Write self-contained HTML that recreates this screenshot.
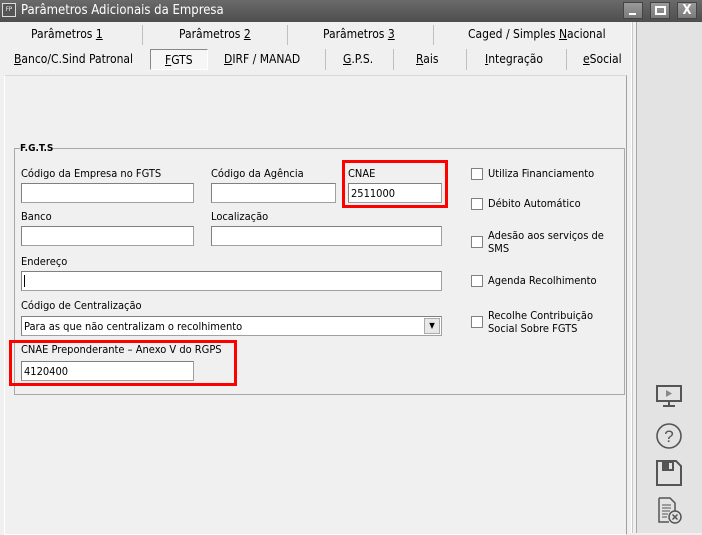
<!DOCTYPE html>
<html><head><meta charset="utf-8"><style>
*{box-sizing:border-box;margin:0;padding:0}
body{width:702px;height:533px;overflow:hidden;background:#f0f0f0;font-family:"DejaVu Sans Condensed","Liberation Sans",sans-serif;font-size:11px;color:#000;position:relative}
.a{position:absolute;white-space:nowrap}
.t{font-size:12px}
.title{left:0;top:0;width:702px;height:22px;background:linear-gradient(#6a6a6a,#4e4e4e);color:#fff;font-size:13px}
.wb{top:2px;width:20px;height:17px;background:linear-gradient(#9a9a9a,#7a7a7a);border:1px solid #444}
.inp{background:#fff;border:1px solid #a0a0a0;border-top-color:#808080;border-left-color:#808080;height:20px;padding:3px 2px}
.cb{width:12px;height:12px;border:1px solid #808080;background:#fff}
.sep{width:1px;background:#c0c0c0}
.red{border:3px solid #f00}
</style></head><body>
<div class="a title"><div class="a" style="left:2px;top:3px;width:14px;height:14px;border:1px solid #ddd;font-size:6px;line-height:12px;text-align:center;background:#555">FP</div><span class="a" style="left:21px;top:3px">Parâmetros Adicionais da Empresa</span>
<div class="a wb" style="left:623px"><div class="a" style="left:5px;top:10px;width:7px;height:2px;background:#fff"></div></div>
<div class="a wb" style="left:650px"><div class="a" style="left:4px;top:3px;width:11px;height:9px;border:2px solid #fff"></div></div>
<div class="a wb" style="left:677px;color:#fff;font-weight:bold;text-align:center;line-height:15px;font-size:13px">X</div></div>
<div class="a" style="left:636px;top:22px;width:66px;height:511px;background:#e3e3e3;border-left:1px solid #a8a8a8"></div>
<div class="a" style="left:631px;top:22px;width:2px;height:511px;background:#fff;border-right:1px solid #c8c8c8"></div>
<span class="a t" style="left:31px;top:27px">Parâmetros <u>1</u></span>
<span class="a t" style="left:179px;top:27px">Parâmetros <u>2</u></span>
<span class="a t" style="left:323px;top:27px">Parâmetros <u>3</u></span>
<span class="a t" style="left:468px;top:27px">Caged / Simples <u>N</u>acional</span>
<div class="a sep" style="left:142px;top:25px;height:20px"></div><div class="a sep" style="left:287px;top:25px;height:20px"></div><div class="a sep" style="left:433px;top:25px;height:20px"></div>
<span class="a t" style="left:14px;top:52px"><u>B</u>anco/C.Sind Patronal</span>
<div class="a" style="left:150px;top:49px;width:58px;height:21px;border:1px solid #888;border-right-color:#fff;border-bottom-color:#fff;background:#f6f6f6"></div>
<span class="a t" style="left:165px;top:53px"><u>F</u>GTS</span>
<span class="a t" style="left:224px;top:52px"><u>D</u>IRF / MANAD</span>
<span class="a t" style="left:343px;top:52px"><u>G</u>.P.S.</span>
<span class="a t" style="left:416px;top:52px"><u>R</u>ais</span>
<span class="a t" style="left:485px;top:52px"><u>I</u>ntegração</span>
<span class="a t" style="left:583px;top:52px"><u>e</u>Social</span>
<div class="a sep" style="left:325px;top:49px;height:21px"></div><div class="a sep" style="left:393px;top:49px;height:21px"></div><div class="a sep" style="left:466px;top:49px;height:21px"></div><div class="a sep" style="left:566px;top:49px;height:21px"></div>
<div class="a" style="left:4px;top:75px;width:623px;height:460px;border:1px solid #fff;border-right-color:#a0a0a0;border-top-color:#d8d8d8"></div>
<div class="a" style="left:14px;top:148px;width:611px;height:247px;border:1px solid #a8a8a8"></div>
<span class="a" style="left:20px;top:143px;font-weight:bold;background:#f0f0f0;font-size:10px">F.G.T.S</span>
<span class="a" style="left:21px;top:167px">Código da Empresa no FGTS</span>
<div class="a inp" style="left:21px;top:183px;width:173px"></div>
<span class="a" style="left:211px;top:167px">Código da Agência</span>
<div class="a inp" style="left:211px;top:183px;width:125px"></div>
<div class="a red" style="left:342px;top:160px;width:106px;height:48px"></div>
<span class="a" style="left:348px;top:167px">CNAE</span>
<div class="a inp" style="left:348px;top:183px;width:94px">2511000</div>
<span class="a" style="left:21px;top:210px">Banco</span>
<div class="a inp" style="left:21px;top:226px;width:173px"></div>
<span class="a" style="left:211px;top:210px">Localização</span>
<div class="a inp" style="left:211px;top:226px;width:231px"></div>
<span class="a" style="left:21px;top:255px">Endereço</span>
<div class="a inp" style="left:21px;top:271px;width:421px"><div style="width:1px;height:12px;background:#000"></div></div>
<span class="a" style="left:21px;top:299px">Código de Centralização</span>
<div class="a inp" style="left:21px;top:316px;width:421px">Para as que não centralizam o recolhimento
<div class="a" style="right:1px;top:1px;width:16px;height:16px;background:#e8e8e8;border:1px solid #aaa;font-size:8px;text-align:center;line-height:14px">▼</div></div>
<div class="a red" style="left:9px;top:340px;width:228px;height:46px"></div>
<span class="a" style="left:21px;top:343px">CNAE Preponderante – Anexo V do RGPS</span>
<div class="a inp" style="left:21px;top:361px;width:173px">4120400</div>
<div class="a cb" style="left:471px;top:168px"></div><span class="a" style="left:488px;top:167px">Utiliza Financiamento</span>
<div class="a cb" style="left:471px;top:198px"></div><span class="a" style="left:488px;top:197px">Débito Automático</span>
<div class="a cb" style="left:471px;top:236px"></div><span class="a" style="left:488px;top:229px;line-height:13px">Adesão aos serviços de<br>SMS</span>
<div class="a cb" style="left:471px;top:275px"></div><span class="a" style="left:488px;top:274px">Agenda Recolhimento</span>
<div class="a cb" style="left:471px;top:316px"></div><span class="a" style="left:488px;top:309px;line-height:13px">Recolhe Contribuição<br>Social Sobre FGTS</span>
<svg class="a" style="left:655px;top:385px" width="28" height="24" viewBox="0 0 28 24"><rect x="2" y="1" width="24" height="15" fill="none" stroke="#555" stroke-width="2"/><path d="M11 5l6 3.5-6 3.5z" fill="#888"/><path d="M14 16v4M8 21h12" stroke="#555" stroke-width="2"/></svg>
<svg class="a" style="left:655px;top:422px" width="28" height="28" viewBox="0 0 28 28"><circle cx="14" cy="14" r="12" fill="none" stroke="#555" stroke-width="1.6"/><text x="14" y="20" font-size="17" text-anchor="middle" fill="#555" font-family="Liberation Sans">?</text></svg>
<svg class="a" style="left:656px;top:460px" width="26" height="26" viewBox="0 0 26 26"><path d="M1 1h19l5 5v19H1z" fill="none" stroke="#555" stroke-width="2"/><rect x="6" y="2" width="12" height="9" fill="#555"/><rect x="13" y="3" width="3" height="6" fill="#e3e3e3"/></svg>
<svg class="a" style="left:657px;top:497px" width="26" height="28" viewBox="0 0 26 28"><path d="M2 1h11l5 5v10M2 1v24h10" fill="none" stroke="#555" stroke-width="1.5"/><path d="M5 8h9M5 11h9M5 14h8M5 17h6M5 20h5" stroke="#555"/><circle cx="18" cy="20" r="6" fill="#e3e3e3" stroke="#555" stroke-width="1.5"/><path d="M15.5 17.5l5 5M20.5 17.5l-5 5" stroke="#555" stroke-width="1.5"/></svg>
</body></html>
